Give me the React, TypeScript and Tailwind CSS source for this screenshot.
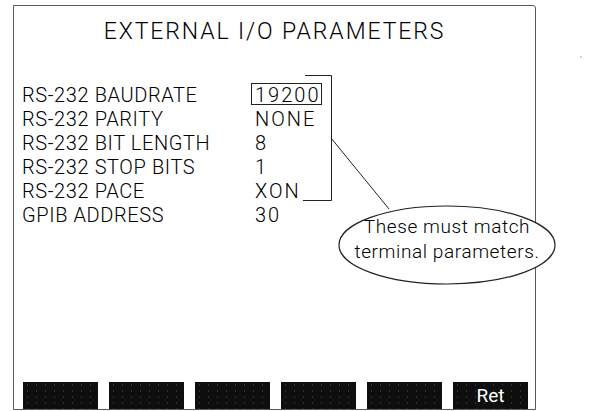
import React from 'react';

const ROWS: { label: string; value: string; selected?: boolean }[] = [
  { label: 'RS-232 BAUDRATE', value: '19200', selected: true },
  { label: 'RS-232 PARITY', value: 'NONE' },
  { label: 'RS-232 BIT LENGTH', value: '8' },
  { label: 'RS-232 STOP BITS', value: '1' },
  { label: 'RS-232 PACE', value: 'XON' },
  { label: 'GPIB ADDRESS', value: '30' },
];

const SOFTKEYS = ['', '', '', '', '', 'Ret'];

const App: React.FC = () => {
  return (
    <div className="relative w-[589px] h-[411px] overflow-hidden bg-white text-black font-['Roboto','Liberation_Sans',Arial,sans-serif] font-light">
      {/* instrument screen */}
      <div className="ml-[13px] mt-[5px] w-[523px] h-[405px] border border-[#5a5a5a] rounded-tr-[3px] flex flex-col">
        <h1 className="mt-[14px] text-center text-[23px] leading-none tracking-[1.9px] font-light">
          EXTERNAL I/O PARAMETERS
        </h1>

        <div className="mt-[40px] pl-[8px] flex flex-col text-[20px] leading-[24px]">
          {ROWS.map((row) => (
            <div key={row.label} className="flex">
              <span className="w-[229px] whitespace-nowrap tracking-[0.6px]">{row.label}</span>
              <span
                className={`h-[22px] leading-[22px] pl-[3px] pr-[1px] border tracking-[2px] ${
                  row.selected ? 'border-[#222]' : 'border-transparent'
                }`}
              >
                {row.value}
              </span>
            </div>
          ))}
        </div>

        <div className="mt-auto flex gap-[11px] pl-[9px]">
          {SOFTKEYS.map((key, i) => (
            <div
              key={i}
              className="w-[75px] h-[27px] bg-[#0e0e0e] bg-[radial-gradient(#8a8a8a_0.6px,transparent_0.8px)] bg-[length:9px_6px] flex items-center justify-center text-white text-[19px] leading-none font-normal"
            >
              {key}
            </div>
          ))}
        </div>
      </div>

      {/* annotation: bracket, leader line and balloon */}
      <svg className="absolute inset-0 pointer-events-none" width="589" height="411" viewBox="0 0 589 411">
        <polyline points="305,75.5 331.5,75.5 331.5,200.5 303,200.5" fill="none" stroke="#222" strokeWidth="1" />
        <line x1="331" y1="138" x2="389" y2="209" stroke="#222" strokeWidth="1" />
        <ellipse cx="447" cy="245" rx="108" ry="39" fill="white" stroke="#222" strokeWidth="1.2" />
        <circle cx="581" cy="57" r="0.8" fill="#999" />
      </svg>
      <div className="absolute left-[341px] top-[214px] w-[212px] text-center text-[19px] leading-[25px] tracking-[0.6px]">
        <div>These must match</div>
        <div>terminal parameters.</div>
      </div>
    </div>
  );
};

export default App;
